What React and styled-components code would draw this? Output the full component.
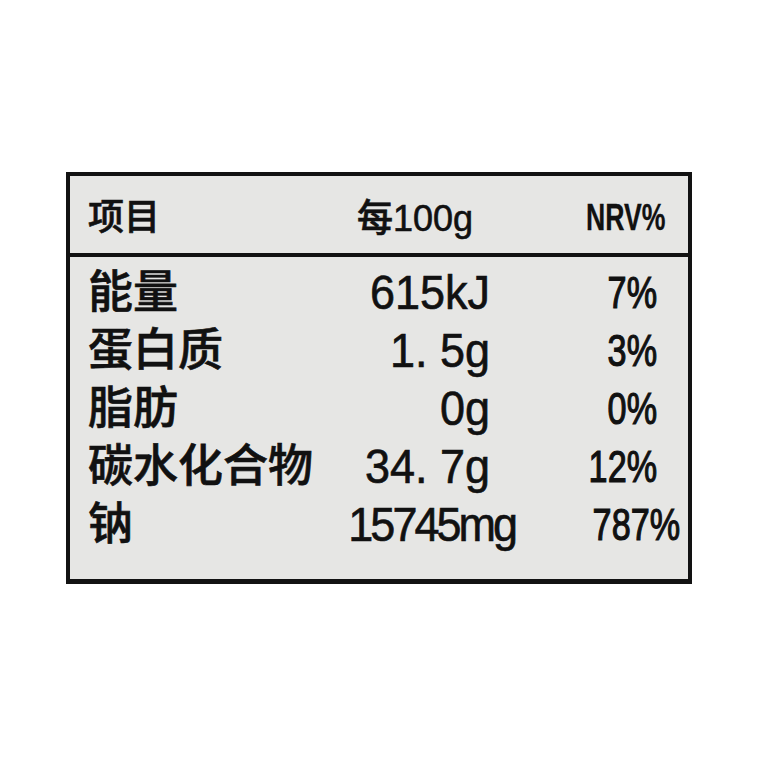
import React from "react";
import styled, { createGlobalStyle } from "styled-components";

const Global = createGlobalStyle`
  html, body { margin: 0; padding: 0; background: #ffffff; }
  body { font-family: "Liberation Sans", "Noto Sans CJK SC", sans-serif; color: #111111; }
`;

const Page = styled.div`
  width: 757px;
  height: 757px;
  padding: 172px 0 0 66px;
  box-sizing: border-box;
`;

const Label = styled.div`
  width: 626px;
  height: 412px;
  box-sizing: border-box;
  border: 4px solid #121212;
  border-bottom-width: 5px;
  background: #e6e6e4;
  display: flex;
  flex-direction: column;
`;

const Grid = styled.div`
  display: grid;
  grid-template-columns: 260px 142px 167px;
  padding-left: 18px;
  align-items: center;
  -webkit-text-stroke: 0.6px #111111;
`;

const Header = styled(Grid)`
  height: 81px;
  padding-top: 6px;
  box-sizing: border-box;
  border-bottom: 4px solid #121212;
  font-size: 36px;
  font-weight: 500;
  line-height: 1;
`;

const Body = styled.div`
  padding-top: 6px;
  display: flex;
  flex-direction: column;
`;

const Row = styled(Grid)`
  height: 58px;
  font-size: 45px;
  font-weight: 500;
  line-height: 1;
`;

const Name = styled.div`
  white-space: nowrap;
`;

const Value = styled.div`
  justify-self: ${(p) => (p.$start ? "start" : "end")};
  padding-left: ${(p) => (p.$start ? "9px" : "0")};
  margin-right: ${(p) => p.$shift || 0}px;
  letter-spacing: ${(p) => p.$tight || 0}px;
  white-space: nowrap;
  transform: scaleY(1.05);
`;

const Nrv = styled.div`
  justify-self: end;
  margin-right: ${(p) => p.$shift || 0}px;
  white-space: nowrap;
  font-weight: ${(p) => (p.$bold ? 700 : 400)};
  -webkit-text-stroke: ${(p) => (p.$bold ? "0.3px" : "1.2px")} #111111;
  transform: scaleX(${(p) => p.$scale || 0.76});
  transform-origin: right center;
`;

const rows = [
  { name: "能量", value: "615kJ", nrv: "7%" },
  { name: "蛋白质", value: "1. 5g", nrv: "3%" },
  { name: "脂肪", value: "0g", nrv: "0%" },
  { name: "碳水化合物", value: "34. 7g", nrv: "12%" },
  { name: "钠", value: "15745mg", nrv: "787%", vShift: -25, tight: -3, nShift: -23 },
];

export default function App() {
  return (
    <>
      <Global />
      <Page>
        <Label>
          <Header>
            <Name>项目</Name>
            <Value $start>每100g</Value>
            <Nrv $bold $scale={0.74} $shift={-8}>NRV%</Nrv>
          </Header>
          <Body>
            {rows.map((r) => (
              <Row key={r.name}>
                <Name>{r.name}</Name>
                <Value $shift={r.vShift} $tight={r.tight}>{r.value}</Value>
                <Nrv $shift={r.nShift}>{r.nrv}</Nrv>
              </Row>
            ))}
          </Body>
        </Label>
      </Page>
    </>
  );
}
